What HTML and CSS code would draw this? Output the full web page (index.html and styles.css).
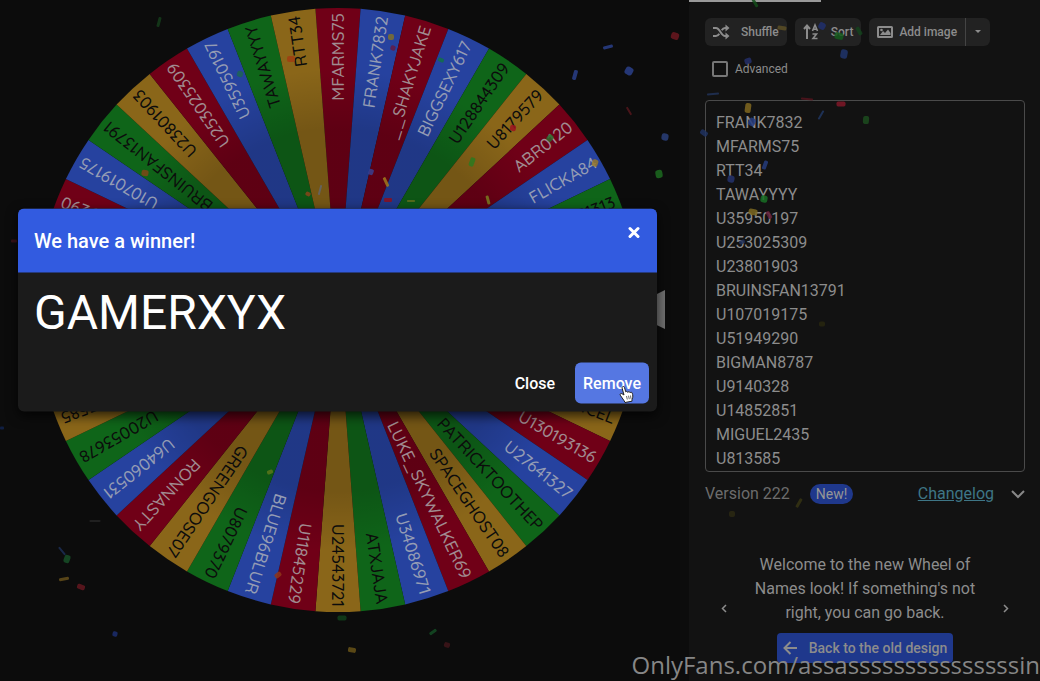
FILE: index.html
```html
<!DOCTYPE html>
<html lang="en">
<head>
    <meta charset="UTF-8">
    <meta name="viewport" content="width=device-width, initial-scale=1.0">
    <title>Wheel of Names</title>
    <link rel="stylesheet" href="styles.css">
</head>
<body>
    <div class="page">
        <main class="stage">
            <div class="wheel-area">
                <svg class="wheel" viewBox="0 0 675 620" role="img" aria-label="Wheel of names">
                    <defs>
                        <radialGradient id="shade" gradientUnits="userSpaceOnUse" cx="338" cy="310" r="302">
                            <stop offset="0.6" stop-color="#000" stop-opacity="0.16"/>
                            <stop offset="0.8" stop-color="#000" stop-opacity="0"/>
                        </radialGradient>
                    </defs>
                    <g id="slices"></g>
                    <circle cx="338" cy="310" r="302" fill="url(#shade)"/>
                    <g id="names"></g>
                    <path d="M625 310 L665 290 V329 Z" fill="#717171"/>
                </svg>

                <div class="modal" role="dialog" aria-labelledby="modalTitle">
                    <div class="modal-header">
                        <h2 id="modalTitle">We have a winner!</h2>
                        <button type="button" class="modal-x" aria-label="Close dialog">
                            <svg width="12" height="12" viewBox="0 0 12 12"><path d="M2 2 L10 10 M10 2 L2 10" stroke="#fff" stroke-width="3" stroke-linecap="round"/></svg>
                        </button>
                    </div>
                    <div class="modal-body">GAMERXYX</div>
                    <div class="modal-footer">
                        <button type="button" class="btn-flat">Close</button>
                        <button type="button" class="btn-remove">Remove
                            <svg class="cursor" width="15" height="18" viewBox="0 0 15 18"><path d="M4.300 1 C3.300 1 2.900 1.800 3.100 2.600 L5 9.500 L3 8.200 C1.900 7.600 .6 8.600 1.300 9.700 L5.200 15.400 L6 17 L13 15.700 L13 13.800 C14.200 11.600 13.900 9.500 13.200 7.600 C12.800 6.400 11.400 6.600 11.200 7.300 C10.800 5.800 9 5.800 8.800 6.900 C8.300 5.700 7 5.700 6.700 6.300 L5.500 2 C5.300 1.300 4.900 1 4.300 1 Z" fill="#fff" stroke="#222" stroke-width="1"/><path d="M7.500 10.500 L8.300 14 M9.500 10.200 L10.300 13.700 M11.500 10 L12 13.300" stroke="#444" stroke-width="0.800"/></svg>
                        </button>
                    </div>
                </div>
            </div>
        </main>

        <aside class="panel">
            <div class="tab-line"></div>
            <div class="toolbar">
                <button type="button" class="tool">
                    <svg width="18" height="18" viewBox="0 0 18 18" fill="none" stroke="currentColor" stroke-width="2"><path d="M1 5 H4 C8 5 9 13 13 13 H15 M1 13 H4 C5.500 13 6.500 12 7.300 10.700 M9.700 7.300 C10.500 6 11.500 5 13 5 H15"/><path d="M13.500 1.500 L17.500 5 L13.500 8.500 Z M13.500 9.500 L17.500 13 L13.500 16.500 Z" fill="currentColor" stroke="none"/></svg>
                    <span>Shuffle</span>
                </button>
                <button type="button" class="tool">
                    <svg width="18" height="18" viewBox="0 0 18 18" fill="none" stroke="currentColor" stroke-width="2"><path d="M5 16 V3 M2 6 L5 2.500 L8 6"/><path d="M10.500 8 L13 2 L15.500 8 M11.500 6.200 H14.500 M10.500 11 H14.500 L11 15.500 H15.500" stroke-width="1.600"/></svg>
                    <span>Sort</span>
                </button>
                <div class="tool-group">
                    <button type="button" class="tool">
                        <svg width="18" height="18" viewBox="0 0 18 18"><path fill="currentColor" fill-rule="evenodd" d="M2.500 3 H15.500 Q17 3 17 4.500 V13.500 Q17 15 15.500 15 H2.500 Q1 15 1 13.500 V4.500 Q1 3 2.500 3 Z M3 5 V13 H15 V5 Z"/><path fill="currentColor" d="M4 12 L7 8 L9 10 L12 6.500 L14.500 10 V12 Z"/><circle cx="5.500" cy="7" r="1.300" fill="currentColor"/></svg>
                        <span>Add image</span>
                    </button>
                    <button type="button" class="tool tool-more" aria-label="More">
                        <svg width="8" height="4" viewBox="0 0 8 4"><path d="M1 0 H7 L4 3 Z" fill="currentColor"/></svg>
                    </button>
                </div>
            </div>
            <div class="advanced">
                <input type="checkbox" id="advanced">
                <label for="advanced">Advanced</label>
            </div>
            <textarea class="entries" rows="15" spellcheck="false" aria-label="Entries">FRANK7832
MFARMS75
RTT34
TAWAYYYY
U35950197
U253025309
U23801903
BRUINSFAN13791
U107019175
U51949290
BIGMAN8787
U9140328
U14852851
MIGUEL2435
U813585</textarea>
            <div class="version">
                <span>Version 222</span>
                <span class="badge">New!</span>
                <a href="#changelog">Changelog</a>
                <button type="button" class="chevron" aria-label="Expand">
                    <svg width="14" height="9" viewBox="0 0 14 9"><path d="M1 1 L7 7 L13 1" fill="none" stroke="currentColor" stroke-width="2"/></svg>
                </button>
            </div>
            <div class="news">
                <button type="button" class="arrow" aria-label="Previous">
                    <svg width="6" height="9" viewBox="0 0 6 9"><path d="M5 1 L1.500 4.500 L5 8" fill="none" stroke="currentColor" stroke-width="1.500"/></svg>
                </button>
                <div class="news-item">
                    <p>Welcome to the new Wheel of Names look! If something's not right, you can go back.</p>
                    <button type="button" class="btn-back">
                        <svg width="14" height="14" viewBox="0 0 14 14"><path d="M14 7 H2 M7.500 1 L1.500 7 L7.500 13" fill="none" stroke="currentColor" stroke-width="2"/></svg>
                        <span>Back to the old design</span>
                    </button>
                </div>
                <button type="button" class="arrow" aria-label="Next">
                    <svg width="6" height="9" viewBox="0 0 6 9"><path d="M1 1 L4.500 4.500 L1 8" fill="none" stroke="currentColor" stroke-width="1.500"/></svg>
                </button>
            </div>
        </aside>

        <svg class="confetti" id="confetti" viewBox="0 0 1040 681" preserveAspectRatio="xMidYMin slice" aria-hidden="true"></svg>
        <div class="watermark">OnlyFans.com/assasssssssssssssssin</div>
    </div>
    <script src="script.js"></script>
</body>
</html>
```
FILE: styles.css
```css
* {
    box-sizing: border-box;
}
body {
    margin: 0;
    background-color: #0c0c0c;
    color: #8c8c8c;
    font-family: Roboto, Arial, sans-serif;
    font-size: 16px;
    line-height: 24px;
}
button {
    border: none;
    padding: 0;
    background: none;
    color: inherit;
    font-family: inherit;
    font-weight: 500;
    cursor: pointer;
}
.page {
    position: relative;
    display: grid;
    grid-template-columns: minmax(0, 1fr) 351px;
    min-height: 100vh;
    overflow: hidden;
}
.stage {
    padding-right: 14px;
}
.wheel-area {
    position: relative;
}
.wheel {
    display: block;
    width: 100%;
}
.wheel text {
    font-family: Quicksand, Lato, sans-serif;
    font-size: 17px;
    font-weight: 500;
    text-anchor: end;
}

/* winner dialog */
.modal {
    position: absolute;
    left: 18px;
    right: 18px;
    top: 50%;
    transform: translateY(-50%);
    z-index: 3;
    border-radius: 6px;
    overflow: hidden;
    background-color: #1b1b1b;
    color: #fff;
    box-shadow: 0 4px 12px rgba(0, 0, 0, 0.7);
}
.modal-header {
    display: flex;
    justify-content: space-between;
    align-items: flex-start;
    padding: 16px;
    background-color: #325be0;
}
.modal-header h2 {
    margin: 0;
    font-size: 20px;
    font-weight: 500;
    line-height: 32px;
}
.modal-x {
    display: flex;
    padding: 2px 1px;
}
.modal-body {
    padding: 8px 16px;
    font-size: 48px;
    line-height: 64px;
}
.modal-footer {
    display: flex;
    justify-content: flex-end;
    gap: 12px;
    padding: 10px 8px 8px;
}
.btn-flat,
.btn-remove {
    height: 41px;
    padding: 0 8px;
    border-radius: 6px;
    font-size: 16px;
}
.btn-remove {
    position: relative;
    background-color: #5577e2;
}
.cursor {
    position: absolute;
    left: 44px;
    top: 23px;
}

/* side panel */
.panel {
    padding: 0 15px 16px 16px;
    border-radius: 6px 0 0 0;
    background-color: #121212;
}
.tab-line {
    width: 132px;
    height: 2px;
    margin-left: -16px;
    background-color: #999;
}
.toolbar {
    display: flex;
    gap: 8px;
    padding-top: 16px;
}
.tool {
    display: flex;
    align-items: center;
    gap: 11px;
    height: 28px;
    padding: 0 8px 0 7px;
    border-radius: 6px;
    background-color: #222;
    font-size: 12px;
}
.tool-group {
    display: flex;
}
.tool-group .tool {
    gap: 5px;
    border-radius: 6px 0 0 6px;
}
.tool-group .tool-more {
    padding: 0 8px;
    border-left: 1px solid #444;
    border-radius: 0 6px 6px 0;
}
.advanced {
    display: flex;
    align-items: center;
    gap: 7px;
    padding: 11px 7px 0;
    font-size: 12px;
}
.advanced input {
    appearance: none;
    width: 16px;
    height: 16px;
    margin: 0;
    border: 2px solid #777;
    border-radius: 2px;
}
.entries {
    display: block;
    width: 100%;
    margin-top: 19px;
    padding: 10px 10px 0;
    border: 1px solid #4a4a4a;
    border-radius: 4px;
    background: none;
    color: #8c8c8c;
    font: inherit;
    resize: none;
    overflow: hidden;
    outline: none;
}
.version {
    display: flex;
    align-items: center;
    margin-top: 10px;
    color: #6c6c6c;
}
.badge {
    margin-left: 20px;
    padding: 0 6px;
    border-radius: 10px;
    background-color: #1f388c;
    color: #969696;
    font-size: 14px;
    line-height: 20px;
}
.version a {
    margin-left: auto;
    color: #3e7686;
}
.chevron {
    display: flex;
    margin-left: 17px;
    color: #888;
}
.news {
    display: flex;
    align-items: center;
    justify-content: space-between;
    margin-top: 47px;
    padding: 0 16px;
}
.news-item {
    display: flex;
    flex-direction: column;
    align-items: center;
    width: 232px;
    text-align: center;
}
.news-item p {
    margin: 0 0 8px;
}
.arrow {
    display: flex;
}
.btn-back {
    display: flex;
    align-items: center;
    gap: 12px;
    height: 30px;
    padding: 0 6px;
    border-radius: 4px;
    background-color: #1f388c;
    font-size: 14px;
    white-space: nowrap;
}

.confetti {
    position: absolute;
    inset: 0;
    width: 100%;
    height: 100%;
    z-index: 2;
    pointer-events: none;
}
.watermark {
    position: absolute;
    right: 0;
    bottom: 0;
    z-index: 4;
    color: #868686;
    font-family: "Open Sans", sans-serif;
    font-size: 24px;
    line-height: 32px;
}
```
FILE: script.js
```js
const SVG = "http://www.w3.org/2000/svg";
const CX = 338, CY = 310, R = 302;

// Clockwise, starting at the top
const names = [
    "MFARMS75", "FRANK7832", "__SHAKYJAKE", "BIGGSEXY617", "U128844309", "U8179579",
    "ABR0120", "FLICKA84", "U5271313", "", "", "", "", "DANCEL", "U130193136",
    "U27641327", "PATRICKTOOTHEP", "SPACEGHOST08", "LUKE_SKYWALKER69", "U34086971",
    "ATXJAJA", "U24543721", "U11845229", "BLUE96BLUR", "U8079370", "GREENGOOSE07",
    "RONNASTY", "U64060531", "U20053678", "U813585", "MIGUEL2435", "U14852851",
    "U9140328", "BIGMAN8787", "U51949290", "U107019175", "BRUINSFAN13791",
    "U23801903", "U253025309", "U35950197", "TAWAYYYY", "RTT34"
];
// slice colour, text colour
const palette = {
    y: ["#8a6619", "#0c0c0c"],
    r: ["#700017", "#a08b90"],
    b: ["#26429f", "#949cb4"],
    g: ["#0f6519", "#0c0c0c"]
};
const order = "rbrbgyrbgyrbgyrbgyrbgyrbgyrbgyrbgyrbgyrbgy";

function add(parent, tag, attrs) {
    const el = document.createElementNS(SVG, tag);
    for (const key in attrs) el.setAttribute(key, attrs[key]);
    parent.appendChild(el);
    return el;
}

function point(deg) {
    const a = deg * Math.PI / 180;
    return (CX + R * Math.cos(a)).toFixed(1) + " " + (CY + R * Math.sin(a)).toFixed(1);
}

const slices = document.getElementById("slices");
const labels = document.getElementById("names");
const step = 360 / names.length;

names.forEach((name, i) => {
    const tone = palette[order[i]];
    const mid = -90 + i * step;
    add(slices, "path", {
        d: `M${CX} ${CY} L${point(mid - step / 2)} A${R} ${R} 0 0 1 ${point(mid + step / 2)} Z`,
        fill: tone[0]
    });
    if (!name) return;
    add(labels, "text", {
        x: CX + R - 5,
        y: CY + 6,
        fill: tone[1],
        transform: `rotate(${mid} ${CX} ${CY})`
    }).textContent = name;
});

// x, y, width, height, angle, colour
const confetti = [
    [675, 36, 8, 7, 20, "#6b1820"], [608, 47, 10, 3, -15, "#2a3f8a"], [629, 71, 8, 8, 30, "#2a3f8a"],
    [575, 75, 4, 10, 15, "#2a3f8a"], [629, 111, 2, 9, -30, "#55161c"], [665, 137, 7, 7, 10, "#2a3f7a"],
    [659, 174, 7, 8, -10, "#1c6b20"], [159, 22, 3, 10, 15, "#153d1b"], [595, 163, 6, 7, 20, "#98792a"],
    [513, 128, 6, 6, 10, "#9c1420"], [550, 138, 6, 7, 40, "#2a6a2c"], [472, 162, 5, 9, 20, "#2b7a20"],
    [386, 182, 3, 10, -25, "#a0791c"], [388, 200, 8, 4, 0, "#8c1020"], [488, 200, 3, 9, -15, "#7a7d20"],
    [391, 37, 6, 6, 0, "#80702c"], [393, 48, 5, 5, 20, "#641a46"], [441, 60, 6, 4, 20, "#127048"],
    [371, 172, 5, 6, 20, "#3a3f90"], [411, 201, 8, 2, 0, "#60701c"], [291, 59, 8, 6, 0, "#a03d12"],
    [240, 74, 6, 6, 20, "#1d6455"], [145, 173, 7, 6, 10, "#7f4716"], [320, 190, 2, 10, 15, "#626468"],
    [308, 194, 5, 4, 30, "#8a451a"], [270, 472, 6, 4, -20, "#5c751a"], [278, 575, 7, 5, -40, "#8f3519"],
    [95, 521, 11, 2, 0, "#242424"], [62, 551, 2, 10, -40, "#1c2e55"], [67, 559, 6, 8, 20, "#185028"],
    [64, 579, 10, 3, -10, "#66501b"], [81, 587, 8, 5, 20, "#641820"], [115, 634, 5, 5, 15, "#1c2e70"],
    [342, 618, 9, 5, 0, "#11401b"], [352, 650, 8, 5, 10, "#695317"], [433, 632, 8, 3, -35, "#144c25"],
    [447, 645, 6, 5, 20, "#40151a"], [2, 428, 4, 3, 0, "#12234d"], [14, 241, 6, 3, 0, "#40131a"],
    [755, 3, 3, 9, -30, "#134c1a"], [782, 28, 9, 4, 10, "#5b4e24"], [822, 26, 7, 7, 30, "#202f6c"],
    [839, 36, 9, 7, 10, "#14591c"], [859, 31, 4, 9, -30, "#14421c"], [844, 54, 7, 9, 10, "#20356c"],
    [748, 61, 7, 6, -20, "#242f68"], [713, 94, 12, 2, -5, "#213358"], [807, 99, 12, 2, 5, "#54141d"],
    [841, 104, 9, 5, 0, "#801728"], [748, 108, 6, 10, 8, "#806720"], [821, 115, 2, 10, 30, "#203660"],
    [866, 120, 6, 8, 5, "#1c4c1f"], [752, 122, 7, 8, 30, "#273d80"], [704, 133, 8, 5, 35, "#203360"],
    [765, 165, 4, 9, 20, "#263c7c"], [731, 179, 7, 7, 10, "#25336d"], [764, 199, 7, 7, 10, "#177025"],
    [753, 212, 9, 6, 10, "#7c6921"], [769, 215, 4, 8, -30, "#64203a"], [799, 503, 3, 10, 30, "#363413"],
    [732, 514, 6, 6, 0, "#2b2913"], [742, 242, 6, 4, -20, "#20305b"], [822, 324, 6, 5, 0, "#28270f"]
];
confetti.forEach(([x, y, w, h, angle, fill]) => {
    add(document.getElementById("confetti"), "rect", {
        x: x - w / 2, y: y - h / 2, width: w, height: h,
        rx: Math.min(w, h) / 3, fill, "fill-opacity": 0.85,
        transform: `rotate(${angle} ${x} ${y})`
    });
});
```
